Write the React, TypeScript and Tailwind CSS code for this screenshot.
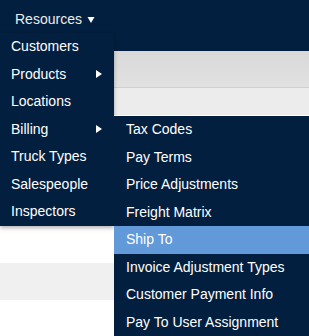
const mainItems = [
  { label: 'Customers' },
  { label: 'Products', sub: true },
  { label: 'Locations' },
  { label: 'Billing', sub: true },
  { label: 'Truck Types' },
  { label: 'Salespeople' },
  { label: 'Inspectors' },
];

const billingItems = [
  'Tax Codes',
  'Pay Terms',
  'Price Adjustments',
  'Freight Matrix',
  'Ship To',
  'Invoice Adjustment Types',
  'Customer Payment Info',
  'Pay To User Assignment',
];

const Caret = ({ dir }: { dir: 'down' | 'right' }) =>
  dir === 'down' ? (
    <svg width="8" height="6" viewBox="0 0 8 6" className="ml-[5px] mt-[2px]">
      <path d="M0.5 0H7.5L4 6Z" fill="#fff" />
    </svg>
  ) : (
    <svg width="6" height="8" viewBox="0 0 6 8">
      <path d="M0 0L6 4L0 8Z" fill="#fff" />
    </svg>
  );

export default function App() {
  return (
    <div
      className="relative w-[309px] h-[336px] overflow-hidden bg-white text-white"
      style={{ fontFamily: '"Liberation Sans", Arial, sans-serif' }}
    >
      {/* page behind the menus */}
      <div className="flex flex-col">
        <div className="h-[51px] bg-[#031f3f]" />
        <div className="h-[37px] bg-gradient-to-b from-[#d9d9d9] to-[#e1e1e1] border-b border-[#cfcfcf]" />
        <div className="h-[27px] bg-[#ececec]" />
        <div className="h-[148px] bg-white" />
        <div className="h-[37px] bg-[#f0f0f0]" />
        <div className="flex-1 bg-white" />
      </div>

      {/* nav header */}
      <div className="absolute left-[15px] top-[10px] flex items-center text-[14px] leading-[18px] text-[#ececec]">
        Resources
        <Caret dir="down" />
      </div>

      {/* resources dropdown */}
      <div className="absolute left-0 top-[33px] w-[114px] bg-[#031f3f] shadow-[0_2px_4px_rgba(0,0,0,0.3)]">
        {mainItems.map((item) => (
          <div
            key={item.label}
            className="h-[27.5px] flex items-center justify-between pl-[11px] pr-[12px] text-[14px]"
          >
            <span>{item.label}</span>
            {item.sub && <Caret dir="right" />}
          </div>
        ))}
      </div>

      {/* billing submenu */}
      <div className="absolute left-[114px] top-[116px] w-[210px] bg-[#031f3f]">
        {billingItems.map((label) => (
          <div
            key={label}
            className={`h-[27.5px] flex items-center pl-[12px] text-[14px] whitespace-nowrap ${
              label === 'Ship To' ? 'bg-[#6199d9]' : ''
            }`}
          >
            {label}
          </div>
        ))}
      </div>
    </div>
  );
}
